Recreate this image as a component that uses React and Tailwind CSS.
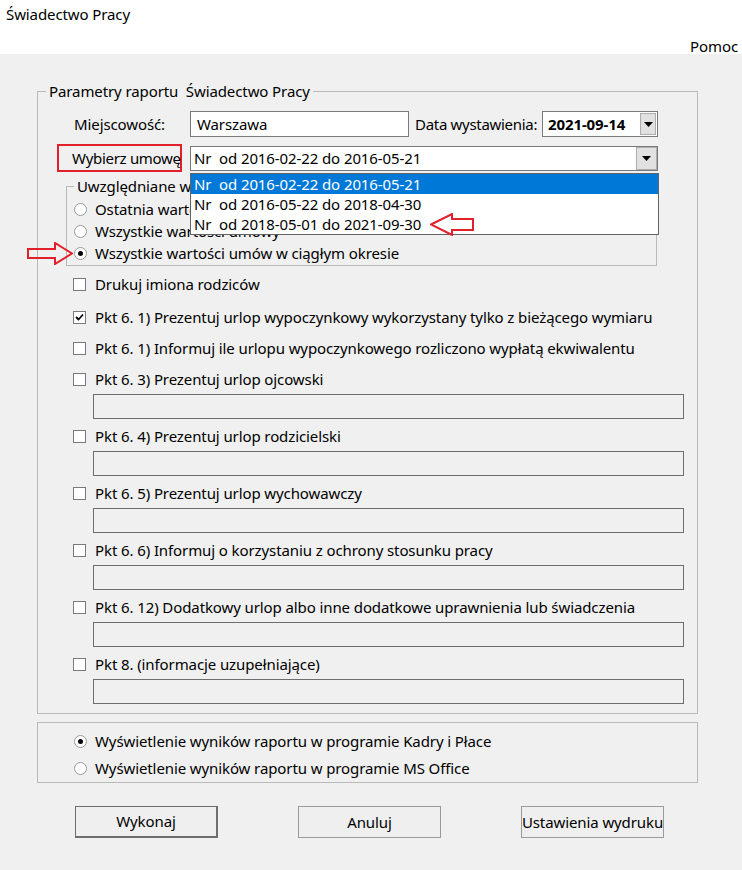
import { useState } from "react";

const contracts = [
  "Nr  od 2016-02-22 do 2016-05-21",
  "Nr  od 2016-05-22 do 2018-04-30",
  "Nr  od 2018-05-01 do 2021-09-30",
];

const options = [
  { label: "Pkt 6. 1) Prezentuj urlop wypoczynkowy wykorzystany tylko z bieżącego wymiaru", checked: true },
  { label: "Pkt 6. 1) Informuj ile urlopu wypoczynkowego rozliczono wypłatą ekwiwalentu" },
];

const notes = [
  "Pkt 6. 3) Prezentuj urlop ojcowski",
  "Pkt 6. 4) Prezentuj urlop rodzicielski",
  "Pkt 6. 5) Prezentuj urlop wychowawczy",
  "Pkt 6. 6) Informuj o korzystaniu z ochrony stosunku pracy",
  "Pkt 6. 12) Dodatkowy urlop albo inne dodatkowe uprawnienia lub świadczenia",
  "Pkt 8. (informacje uzupełniające)",
];

function Radio({ checked }) {
  return (
    <span className="w-[13px] h-[13px] rounded-full border border-[#9a9a9a] bg-white flex items-center justify-center shrink-0">
      {checked && <span className="w-[5px] h-[5px] rounded-full bg-black" />}
    </span>
  );
}

function Checkbox({ checked }) {
  return (
    <span className="w-[13px] h-[13px] border border-[#7a7a7a] bg-white flex items-center justify-center shrink-0">
      {checked && (
        <svg width="9" height="8" viewBox="0 0 9 8">
          <path d="M1 4 L3.5 6.5 L8 1.5" stroke="#000" strokeWidth="1.8" fill="none" />
        </svg>
      )}
    </span>
  );
}

function DropButton({ className }) {
  return (
    <span className={"flex items-center justify-center bg-[#e1e1e1] border border-[#adadad] shrink-0 " + className}>
      <svg width="9" height="5" viewBox="0 0 9 5">
        <path d="M0 0 H9 L4.5 5 Z" fill="#000" />
      </svg>
    </span>
  );
}

function CheckRow({ label, checked, className = "" }) {
  return (
    <label className={"flex items-center h-[22px] ml-[35px] gap-[9px] " + className}>
      <Checkbox checked={checked} />
      <span>{label}</span>
    </label>
  );
}

export default function App() {
  const [mode, setMode] = useState(2);
  const [output, setOutput] = useState(0);

  return (
    <div className="relative w-[742px] h-[870px] bg-[#f0f0f0] text-black text-[15px] tracking-[-0.1px] whitespace-nowrap font-['Noto_Sans',sans-serif] overflow-hidden">
      {/* okno: tytuł i menu */}
      <div className="bg-white h-[54px] relative">
        <div className="absolute left-[6px] top-[3px] leading-[22px]">Świadectwo Pracy</div>
        <div className="absolute right-[4px] top-[35px] leading-[22px]">Pomoc</div>
      </div>

      <fieldset className="ml-[37px] mt-[27px] w-[661px] border border-[#b9b9b9] pb-[9px]">
        <legend className="ml-[8px] px-[3px] leading-[20px]">Parametry raportu&nbsp; Świadectwo Pracy</legend>

        {/* miejscowość i data */}
        <div className="flex items-center mt-[10px] pl-[36px]">
          <span className="w-[116px] shrink-0">Miejscowość:</span>
          <div className="w-[219px] h-[26px] shrink-0 bg-white border border-[#7a7a7a] px-[6px] leading-[24px]">Warszawa</div>
          <span className="ml-[6px] w-[127px] shrink-0 tracking-[-0.3px]">Data wystawienia:</span>
          <div className="w-[116px] h-[26px] shrink-0 bg-white border border-[#7a7a7a] flex items-center">
            <span className="font-bold flex-1 pl-[5px] leading-[24px]">2021-09-14</span>
            <DropButton className="w-[16px] h-[22px] mr-[1px]" />
          </div>
        </div>

        {/* wybór umowy */}
        <div className="flex items-center mt-[7px] pl-[19px]">
          <div className="w-[125px] h-[28px] shrink-0 border-2 border-[#e3202a] pl-[13px] leading-[24px] tracking-[-0.3px]">Wybierz umowę</div>
          <div className="relative ml-[8px]">
            <div className="w-[468px] h-[25px] bg-white border border-[#7a7a7a] flex items-center">
              <span className="flex-1 pl-[3px] whitespace-pre leading-[23px]">{contracts[0]}</span>
              <DropButton className="w-[21px] h-[23px]" />
            </div>
            <ul className="absolute left-0 top-[27px] w-[469px] bg-white border border-[#646464] z-10">
              {contracts.map((c, i) => (
                <li
                  key={c}
                  className={
                    "h-[20px] leading-[20px] pl-[3px] whitespace-pre " +
                    (i === 0 ? "bg-[#0078d7] text-white" : "")
                  }
                >
                  {c}
                </li>
              ))}
            </ul>
          </div>
        </div>

        {/* uwzględniane wartości */}
        <fieldset className="ml-[28px] mt-[4px] w-[591px] border border-[#b9b9b9] pb-[1px]">
          <legend className="ml-[7px] px-[3px] leading-[20px]">Uwzględniane wartości umów</legend>
          <div className="pt-[2px] pl-[7px]">
            {["Ostatnia wartość umowy", "Wszystkie wartości umowy", "Wszystkie wartości umów w ciągłym okresie"].map((t, i) => (
              <label key={t} className="flex items-center h-[22px] gap-[8px]" onClick={() => setMode(i)}>
                <Radio checked={mode === i} />
                <span>{t}</span>
              </label>
            ))}
          </div>
        </fieldset>

        <CheckRow label="Drukuj imiona rodziców" className="mt-[7px]" />
        {options.map((o, i) => (
          <CheckRow key={o.label} label={o.label} checked={o.checked} className={i === 0 ? "mt-[11px]" : "mt-[9px]"} />
        ))}

        {notes.map((n, i) => (
          <div key={n} className={i === 0 ? "mt-[9px]" : "mt-[6px]"}>
            <CheckRow label={n} />
            <div className="ml-[55px] mt-[4px] w-[591px] h-[25px] border border-[#6d6d6d] bg-[#f0f0f0]" />
          </div>
        ))}
      </fieldset>

      {/* sposób wyświetlenia wyników */}
      <div className="ml-[37px] mt-[8px] w-[661px] border border-[#b9b9b9] pt-[7px] pb-[3px] pl-[36px] flex flex-col gap-[5px]">
        {["Wyświetlenie wyników raportu w programie Kadry i Płace", "Wyświetlenie wyników raportu w programie MS Office"].map((t, i) => (
          <label key={t} className="flex items-center h-[22px] gap-[8px]" onClick={() => setOutput(i)}>
            <Radio checked={output === i} />
            <span>{t}</span>
          </label>
        ))}
      </div>

      <div className="flex mt-[23px] ml-[75px] gap-[80px]">
        {["Wykonaj", "Anuluj", "Ustawienia wydruku"].map((b, i) => (
          <button
            key={b}
            className={
              "w-[143px] h-[32px] bg-[#efefef] border border-[#6e6e6e] flex items-center justify-center " +
              (i === 0 ? "border-r-2 border-b-2" : "border-[#9a9a9a]")
            }
          >
            {b}
          </button>
        ))}
      </div>

      {/* strzałki */}
      <svg className="absolute left-[27px] top-[242px]" width="46" height="23" viewBox="0 0 46 23">
        <path d="M1 7 H28 V1 L45 11.5 L28 22 V16 H1 Z" fill="none" stroke="#e3202a" strokeWidth="2" />
      </svg>
      <svg className="absolute left-[430px] top-[213px] z-20" width="44" height="23" viewBox="0 0 44 23">
        <path d="M1 11.5 L22 1 V6 H43 V17 H22 V22 Z" fill="none" stroke="#e3202a" strokeWidth="2" />
      </svg>
    </div>
  );
}
